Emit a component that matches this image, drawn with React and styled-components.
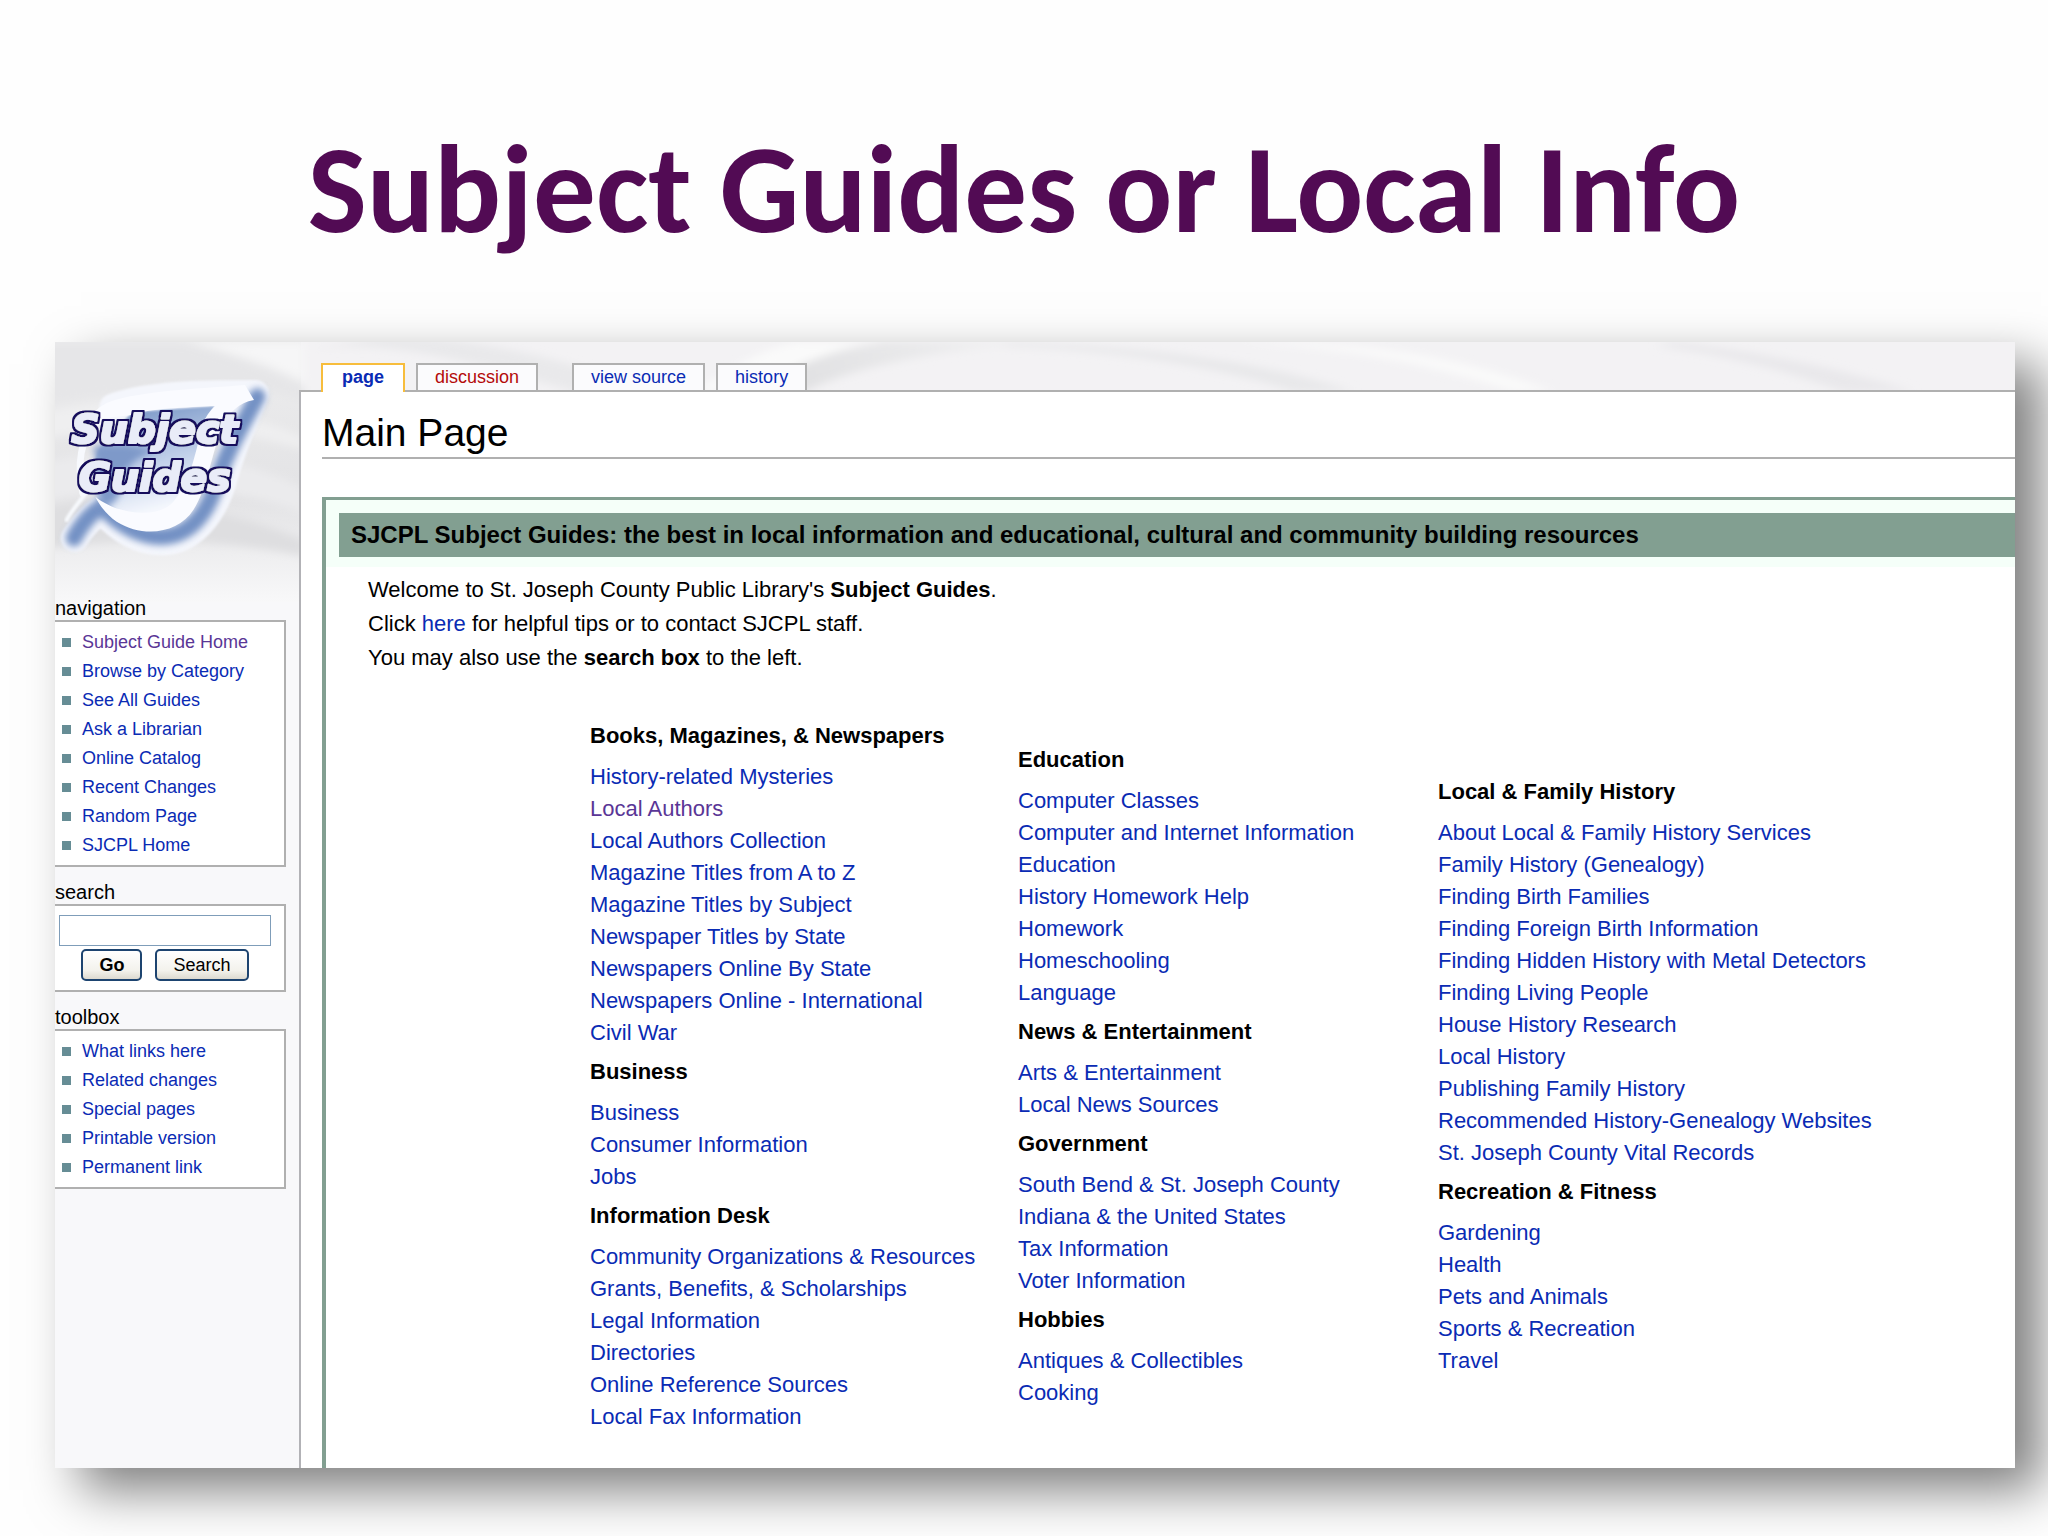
import styled, { createGlobalStyle, css } from 'styled-components'

const GlobalStyle = createGlobalStyle`
    * {
        box-sizing: border-box;
    }
    body {
        margin: 0;
        background-color: #fefefe;
        color: #000000;
        font-family: "Liberation Sans", Arial, sans-serif;
    }
`

const navigation = [
    { text: 'Subject Guide Home', visited: true },
    { text: 'Browse by Category' },
    { text: 'See All Guides' },
    { text: 'Ask a Librarian' },
    { text: 'Online Catalog' },
    { text: 'Recent Changes' },
    { text: 'Random Page' },
    { text: 'SJCPL Home' },
]

const toolbox = [
    { text: 'What links here' },
    { text: 'Related changes' },
    { text: 'Special pages' },
    { text: 'Printable version' },
    { text: 'Permanent link' },
]

const visitedGuides = ['Local Authors']

const guideColumns = [
    [
        {
            title: 'Books, Magazines, & Newspapers',
            links: [
                'History-related Mysteries',
                'Local Authors',
                'Local Authors Collection',
                'Magazine Titles from A to Z',
                'Magazine Titles by Subject',
                'Newspaper Titles by State',
                'Newspapers Online By State',
                'Newspapers Online - International',
                'Civil War',
            ],
        },
        { title: 'Business', links: ['Business', 'Consumer Information', 'Jobs'] },
        {
            title: 'Information Desk',
            links: [
                'Community Organizations & Resources',
                'Grants, Benefits, & Scholarships',
                'Legal Information',
                'Directories',
                'Online Reference Sources',
                'Local Fax Information',
            ],
        },
    ],
    [
        {
            title: 'Education',
            links: [
                'Computer Classes',
                'Computer and Internet Information',
                'Education',
                'History Homework Help',
                'Homework',
                'Homeschooling',
                'Language',
            ],
        },
        { title: 'News & Entertainment', links: ['Arts & Entertainment', 'Local News Sources'] },
        {
            title: 'Government',
            links: [
                'South Bend & St. Joseph County',
                'Indiana & the United States',
                'Tax Information',
                'Voter Information',
            ],
        },
        { title: 'Hobbies', links: ['Antiques & Collectibles', 'Cooking'] },
    ],
    [
        {
            title: 'Local & Family History',
            links: [
                'About Local & Family History Services',
                'Family History (Genealogy)',
                'Finding Birth Families',
                'Finding Foreign Birth Information',
                'Finding Hidden History with Metal Detectors',
                'Finding Living People',
                'House History Research',
                'Local History',
                'Publishing Family History',
                'Recommended History-Genealogy Websites',
                'St. Joseph County Vital Records',
            ],
        },
        {
            title: 'Recreation & Fitness',
            links: ['Gardening', 'Health', 'Pets and Animals', 'Sports & Recreation', 'Travel'],
        },
    ],
]

const SwirlBackdrop = () => (
    <Backdrop viewBox="0 0 1960 260" preserveAspectRatio="xMinYMin slice" aria-hidden="true">
        <defs>
            <linearGradient id="fade" x1="0" y1="0" x2="0" y2="1">
                <stop offset="0" stopColor="#ededee" />
                <stop offset="0.6" stopColor="#e3e3e5" />
                <stop offset="1" stopColor="#f8f8f9" />
            </linearGradient>
            <linearGradient id="band" x1="0" y1="0" x2="1" y2="0">
                <stop offset="0" stopColor="#dedee0" />
                <stop offset="1" stopColor="#f3f3f4" />
            </linearGradient>
            <filter id="soften" x="-10%" y="-10%" width="120%" height="120%">
                <feGaussianBlur stdDeviation="4" />
            </filter>
        </defs>
        <rect width="1960" height="260" fill="#f3f2f4" />
        <rect width="246" height="260" fill="url(#fade)" />
        <g filter="url(#soften)">
            <path d="M-10 0 H130 C180 14 220 30 250 46 V60 C170 30 90 50 -10 62 Z" fill="#e6e6e8" />
            <path d="M-10 70 C80 50 170 60 250 96 V108 C160 80 70 84 -10 96 Z" fill="#efeff0" />
            <path d="M-10 120 C90 100 180 112 250 146 V172 C170 140 80 140 -10 160 Z" fill="#ebebed" />
            <path d="M-10 165 C90 150 180 170 250 198 V214 C160 196 80 196 -10 206 Z" fill="#dedee0" />
            <path d="M130 0 H250 V40 C210 20 170 8 130 0 Z" fill="#f6f6f7" />
            <path d="M250 8 C330 -4 420 20 520 50 H600 C520 20 420 -6 330 -6 Z" fill="#e9e9eb" />
            <path d="M640 50 C670 30 700 10 740 0 H830 C770 10 730 30 700 50 Z" fill="#fafafa" />
            <path d="M700 50 C730 28 770 8 830 0 H1000 C890 6 800 24 750 50 Z" fill="url(#band)" />
            <path d="M960 0 C1120 6 1220 24 1300 50 H1240 C1160 24 1060 8 940 4 Z" fill="#e8e8ea" />
            <path d="M1180 0 C1300 6 1380 24 1460 50 H1500 C1420 20 1340 4 1240 0 Z" fill="#fafafa" />
            <path d="M1620 0 C1720 12 1790 28 1860 50 H1790 C1730 30 1680 14 1600 4 Z" fill="#e9e8eb" />
        </g>
    </Backdrop>
)

const SubjectGuidesLogo = () => (
    <Logo viewBox="165 66 732 762" role="img" aria-label="Subject Guides">
        <defs>
            <linearGradient id="bowl" x1="0" y1="0" x2="0.3" y2="1">
                <stop offset="0" stopColor="#6c8cc0" />
                <stop offset="0.55" stopColor="#b9cae6" />
                <stop offset="1" stopColor="#f4f7fd" />
            </linearGradient>
            <filter id="glow" x="-20%" y="-20%" width="140%" height="140%">
                <feGaussianBlur stdDeviation="11" />
            </filter>
            <filter id="edge" x="-10%" y="-10%" width="120%" height="120%">
                <feGaussianBlur stdDeviation="3" />
            </filter>
            <filter id="outline" x="-10%" y="-10%" width="120%" height="120%">
                <feMorphology in="SourceAlpha" operator="dilate" radius="6" result="thick" />
                <feFlood floodColor="#15105c" />
                <feComposite in2="thick" operator="in" result="border" />
                <feMerge>
                    <feMergeNode in="border" />
                    <feMergeNode in="SourceGraphic" />
                </feMerge>
            </filter>
        </defs>
        <g fill="none" strokeLinecap="round" strokeLinejoin="round">
            <path
                d="M340 262 C450 222 620 222 765 222 C735 300 700 370 672 470 C640 590 570 664 485 664 C410 664 350 620 306 570 C270 590 240 630 224 654"
                stroke="#f4f6fc"
                strokeWidth="84"
                filter="url(#edge)"
            />
            <path
                d="M772 230 C735 300 690 370 655 470 C625 585 565 648 485 650 C410 650 350 605 306 560 C268 580 236 626 222 654"
                stroke="#7391c4"
                strokeWidth="50"
                filter="url(#glow)"
            />
            <path d="M300 300 C236 350 232 440 248 520" stroke="#f7f9fd" strokeWidth="20" />
            <path d="M200 600 C215 570 240 545 256 520" stroke="#f7f9fd" strokeWidth="12" filter="url(#edge)" />
        </g>
        <path
            d="M400 276 L645 258 C600 340 600 460 540 540 C480 610 370 600 310 540 C260 470 280 400 330 340 Z"
            fill="url(#bowl)"
            filter="url(#edge)"
        />
        <path d="M280 380 C300 450 290 500 300 560 C340 570 370 520 370 460 C420 400 440 400 480 400 C420 370 330 370 280 380 Z" fill="#7e99c9" filter="url(#glow)" />
        <path
            d="M345 240 C450 210 620 205 735 195 L762 240 C715 248 690 275 668 320 C630 410 625 500 580 570 C535 640 430 655 350 605 C320 585 298 555 286 530 C350 582 470 600 520 545 C575 480 590 380 606 320 C616 290 630 272 645 258 C560 262 440 266 400 284 L270 300 C280 270 310 250 345 240 Z"
            fill="#fafbff"
        />
        <g filter="url(#outline)">
            <LogoText x="214" y="370">Subject</LogoText>
            <LogoText x="236" y="513">Guides</LogoText>
        </g>
    </Logo>
)

const LinkPortlet = ({ title, items }) => (
    <Portlet>
        <PortletTitle>{title}</PortletTitle>
        <PortletBody>
            <PortletList>
                {items.map(item => (
                    <PortletItem key={item.text}>
                        <WikiLink href="#" $visited={item.visited}>{item.text}</WikiLink>
                    </PortletItem>
                ))}
            </PortletList>
        </PortletBody>
    </Portlet>
)

const SearchPortlet = () => (
    <Portlet>
        <PortletTitle>
            <label htmlFor="search-input">search</label>
        </PortletTitle>
        <SearchForm onSubmit={e => e.preventDefault()}>
            <SearchInput id="search-input" type="text" />
            <SearchButtons>
                <SearchButton type="submit" $primary>Go</SearchButton>
                <SearchButton type="submit">Search</SearchButton>
            </SearchButtons>
        </SearchForm>
    </Portlet>
)

const GuideColumn = ({ groups }) => (
    <Column>
        {groups.map(group => (
            <section key={group.title}>
                <GroupTitle>{group.title}</GroupTitle>
                <GroupList>
                    {group.links.map(link => (
                        <li key={link}>
                            <WikiLink href="#" $visited={visitedGuides.includes(link)}>{link}</WikiLink>
                        </li>
                    ))}
                </GroupList>
            </section>
        ))}
    </Column>
)

const App = () => (
    <>
        <GlobalStyle />
        <Slide>
            <SlideTitle>Subject Guides or Local Info</SlideTitle>
            <WikiFrame>
                <SwirlBackdrop />
                <Sidebar>
                    <SubjectGuidesLogo />
                    <LinkPortlet title="navigation" items={navigation} />
                    <SearchPortlet />
                    <LinkPortlet title="toolbox" items={toolbox} />
                </Sidebar>
                <Main>
                    <Tabs>
                        <Tab href="#" $selected>page</Tab>
                        <Tab href="#" $missing>discussion</Tab>
                        <TabSpacer />
                        <Tab href="#">view source</Tab>
                        <Tab href="#">history</Tab>
                    </Tabs>
                    <Content>
                        <PageTitle>Main Page</PageTitle>
                        <GuideBox>
                            <BannerWrap>
                                <Banner>
                                    SJCPL Subject Guides: the best in local information and educational, cultural and
                                    community building resources
                                </Banner>
                            </BannerWrap>
                            <Intro>
                                Welcome to St. Joseph County Public Library's <b>Subject Guides</b>.<br />
                                Click <WikiLink href="#">here</WikiLink> for helpful tips or to contact SJCPL staff.<br />
                                You may also use the <b>search box</b> to the left.
                            </Intro>
                            <Columns>
                                {guideColumns.map(groups => (
                                    <GuideColumn key={groups[0].title} groups={groups} />
                                ))}
                            </Columns>
                        </GuideBox>
                    </Content>
                </Main>
            </WikiFrame>
        </Slide>
    </>
)

export default App

const Slide = styled.div`
    padding: 130px 33px 68px 55px;
`

const SlideTitle = styled.h1`
    margin: 0 0 92px;
    padding-right: 22px;
    color: #520b54;
    font-family: Carlito, Lato, sans-serif;
    font-size: 125px;
    font-weight: 700;
    line-height: 120px;
    text-align: center;
`

const WikiFrame = styled.div`
    position: relative;
    display: grid;
    grid-template-columns: 244px 1fr;
    background-color: #f8f8fa;
    box-shadow: 26px 22px 48px rgba(0, 0, 0, 0.5);
`

const Backdrop = styled.svg`
    position: absolute;
    top: 0;
    left: 0;
    width: 100%;
    height: 260px;
`

const Sidebar = styled.aside`
    position: relative;
    display: flex;
    flex-direction: column;
    gap: 13px;
    padding-right: 13px;
`

const Logo = styled.svg`
    display: block;
    width: 244px;
    height: 254px;
    margin-bottom: -13px;
`

const LogoText = styled.text`
    fill: #e9ecf8;
    stroke: #e9ecf8;
    stroke-width: 6px;
    stroke-linejoin: round;
    font-family: "DejaVu Sans", sans-serif;
    font-size: 118px;
    font-style: italic;
    font-weight: 700;
`

const WikiLink = styled.a`
    color: ${props => (props.$visited ? '#5a3696' : '#0a2bb4')};
    text-decoration: none;

    &:hover {
        text-decoration: underline;
    }
`

const Portlet = styled.section`
    display: block;
`

const PortletTitle = styled.h2`
    margin: 0;
    font-size: 20px;
    font-weight: 400;
    line-height: 24px;
`

const portletBox = css`
    background-color: #ffffff;
    border: 2px solid #b0b0b0;
    border-left: none;
`

const PortletBody = styled.div`
    ${portletBox}
    padding: 6px 0 5px;
`

const PortletList = styled.ul`
    margin: 0;
    padding: 0;
    list-style: none;
`

const PortletItem = styled.li`
    display: flex;
    align-items: center;
    gap: 11px;
    padding-left: 7px;
    font-size: 18px;
    line-height: 29px;

    &::before {
        content: "";
        width: 9px;
        height: 9px;
        background-color: #668d95;
    }
`

const SearchForm = styled.form`
    ${portletBox}
    padding: 9px 13px 9px 4px;
`

const SearchInput = styled.input`
    display: block;
    width: 100%;
    height: 31px;
    padding: 2px 4px;
    background-color: #ffffff;
    border: 1px solid #7f9db9;
    border-radius: 0;
    font-family: inherit;
    font-size: 18px;
`

const SearchButtons = styled.div`
    display: flex;
    justify-content: center;
    gap: 13px;
    padding-top: 3px;
`

const SearchButton = styled.button`
    height: 32px;
    padding: 0 16px;
    background: linear-gradient(#ffffff, #f3f2ec 70%, #dddad0);
    border: 2px solid #1d4470;
    border-radius: 5px;
    color: #000000;
    font-family: inherit;
    font-size: 18px;
    font-weight: ${props => (props.$primary ? 700 : 400)};
    cursor: pointer;
`

const Main = styled.main`
    position: relative;
    display: flex;
    flex-direction: column;
    min-width: 0;
`

const Tabs = styled.nav`
    display: flex;
    align-items: flex-end;
    gap: 11px;
    padding: 21px 0 0 22px;
`

const Tab = styled.a`
    height: 27px;
    padding: 0 17px;
    background-color: #fbfbfd;
    border: 2px solid #b0b0b0;
    border-bottom: none;
    color: ${props => (props.$missing ? '#b40a0a' : '#0a2bb4')};
    font-size: 18px;
    line-height: 24px;
    text-decoration: none;

    ${props => props.$selected && css`
        position: relative;
        z-index: 1;
        height: 29px;
        margin-bottom: -2px;
        padding: 0 19px;
        background-color: #ffffff;
        border-color: #f7bd3c;
        font-weight: 700;
    `}
`

const TabSpacer = styled.span`
    width: 12px;
`

const Content = styled.div`
    flex: 1;
    display: flex;
    flex-direction: column;
    padding: 18px 0 0 21px;
    background-color: #ffffff;
    border-top: 2px solid #b0b0b0;
    border-left: 2px solid #b2b2b6;
`

const PageTitle = styled.h2`
    margin: 0 0 38px;
    padding-bottom: 1px;
    border-bottom: 2px solid #b0b0b0;
    font-size: 39px;
    font-weight: 400;
    line-height: 46px;
`

const GuideBox = styled.div`
    flex: 1;
    border: solid #829f91;
    border-width: 3px 0 0 4px;
`

const BannerWrap = styled.div`
    padding: 13px 0 10px 13px;
    background-color: #f5fff9;
`

const Banner = styled.h3`
    margin: 0;
    padding-left: 12px;
    background-color: #829f91;
    font-size: 24px;
    font-weight: 700;
    line-height: 44px;
`

const Intro = styled.p`
    margin: 0;
    padding: 6px 0 0 42px;
    font-size: 22px;
    line-height: 34px;
`

const Columns = styled.div`
    display: grid;
    grid-template-columns: 428px 420px 1fr;
    align-items: center;
    padding: 45px 0 35px 264px;
`

const Column = styled.div`
    display: flex;
    flex-direction: column;
    gap: 7px;
    font-size: 22px;
    line-height: 32px;
`

const GroupTitle = styled.h4`
    margin: 0 0 9px;
    font-size: 22px;
    font-weight: 700;
`

const GroupList = styled.ul`
    margin: 0;
    padding: 0;
    list-style: none;
`
